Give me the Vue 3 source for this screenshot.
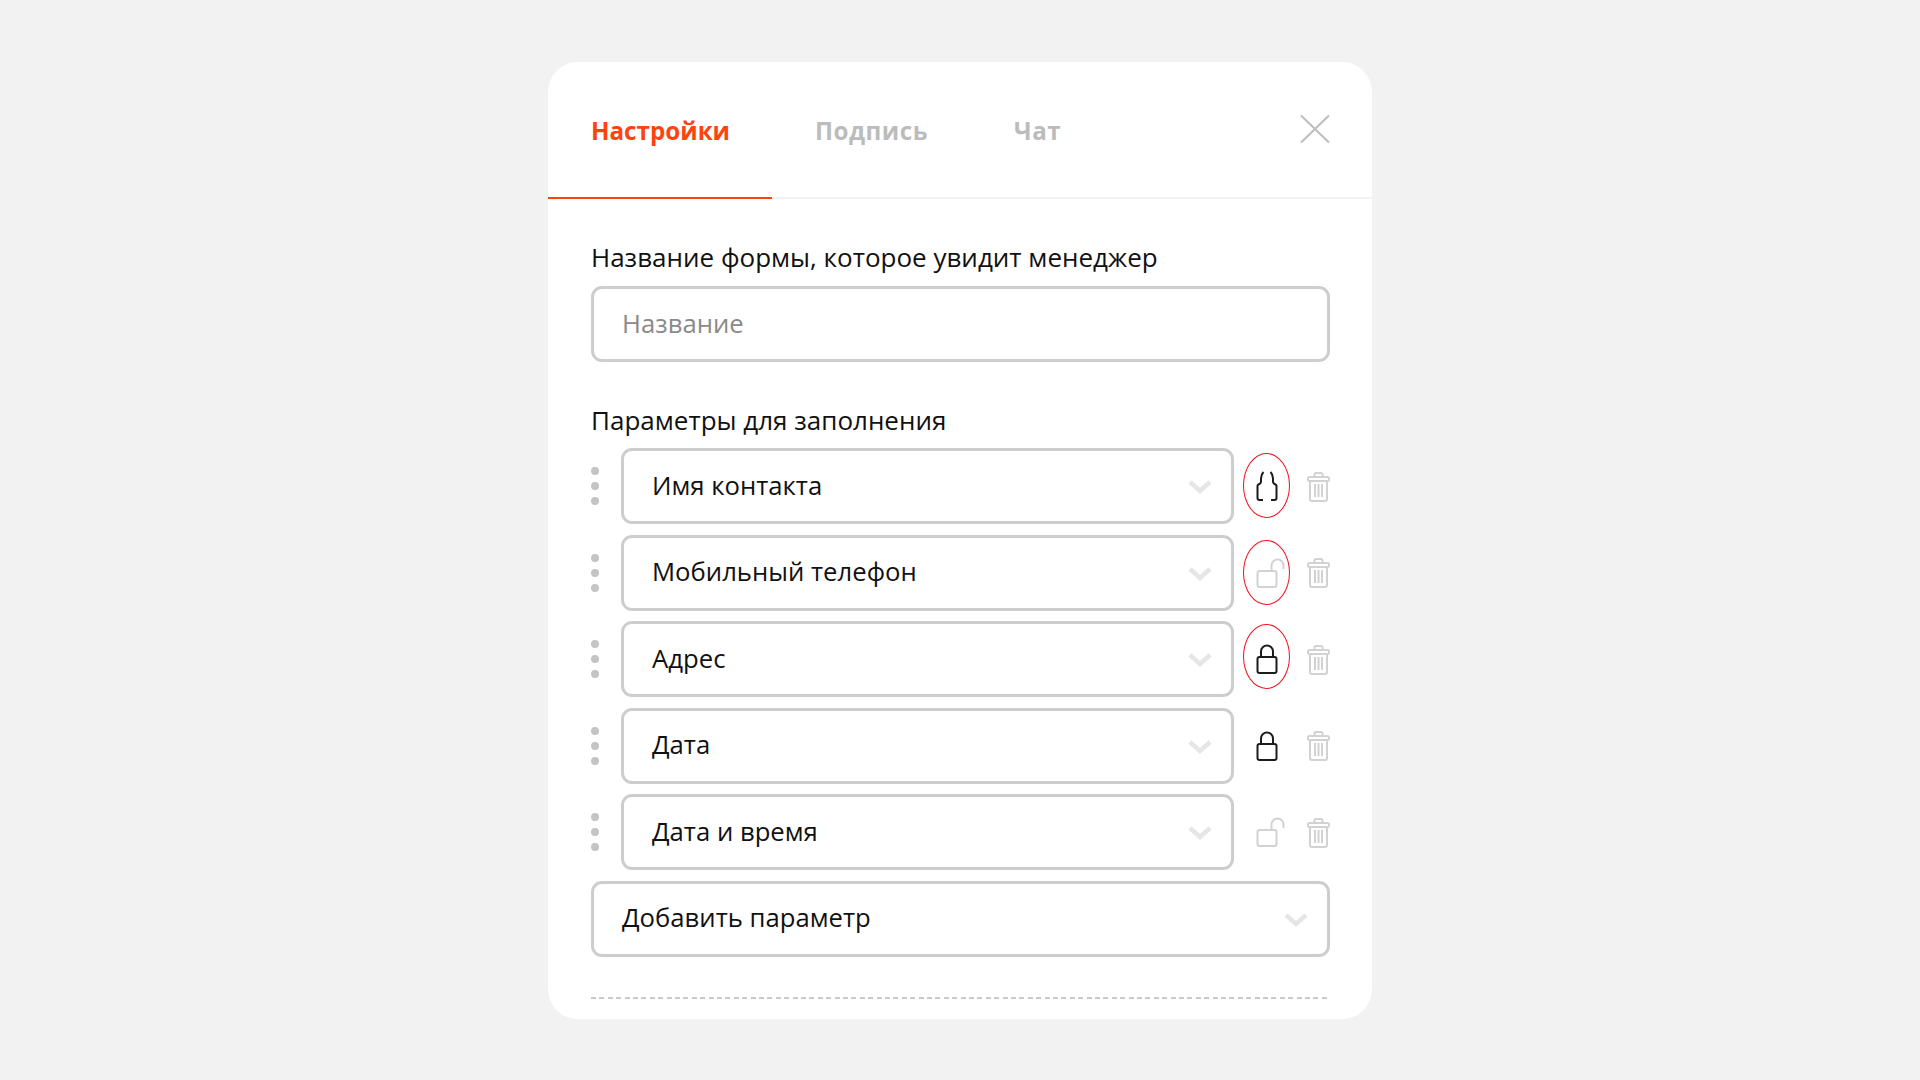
<script setup>
const tabs = [
	{ title: "Настройки", active: true },
	{ title: "Подпись", active: false },
	{ title: "Чат", active: false },
];

const params = [
	{ title: "Имя контакта", lock: "broken", oval: "oval-a" },
	{ title: "Мобильный телефон", lock: "open", oval: "oval-b" },
	{ title: "Адрес", lock: "closed", oval: "oval-c" },
	{ title: "Дата", lock: "closed", oval: "" },
	{ title: "Дата и время", lock: "open", oval: "" },
];
</script>

<template>
	<div class="page">
		<div class="card">
			<div class="header">
				<div v-for="tab in tabs" :key="tab.title" class="tab" :class="{ active: tab.active }">{{ tab.title }}</div>
				<svg class="close" width="30" height="30" viewBox="0 0 30 30" fill="none">
					<path d="M1 1.5L29 28.5M29 1.5L1 28.5" stroke="#bdbdbd" stroke-width="2" />
				</svg>
			</div>

			<div class="content">
				<div class="label">Название формы, которое увидит менеджер</div>
				<div class="field placeholder">Название</div>

				<div class="label label-params">Параметры для заполнения</div>
				<div class="rows">
					<div v-for="param in params" :key="param.title" class="row">
						<div class="dots"><i></i><i></i><i></i></div>
						<div class="field select">
							<span>{{ param.title }}</span>
							<svg class="chevron" width="24" height="14" viewBox="0 0 24 14" fill="none">
								<path d="M2 2L12 11L22 2" stroke="#e6e6e6" stroke-width="4.500" />
							</svg>
						</div>
						<div class="lock-slot">
							<svg width="46" height="34" viewBox="0 0 46 34" fill="none">
								<g v-if="param.lock === 'closed'" stroke="#1c1c1c" stroke-width="2">
									<rect x="14.500" y="15" width="19" height="16" rx="2" />
									<path d="M18 15V9.500a6 6 0 0 1 12 0v5.500" />
								</g>
								<g v-else-if="param.lock === 'open'" stroke="#d2d2d2" stroke-width="2">
									<rect x="14.500" y="15" width="19" height="16" rx="2" />
									<path d="M28.500 15V9.500a6 6 0 0 1 12 0v3.500" />
								</g>
								<g v-else stroke="#1c1c1c" stroke-width="2">
									<path d="M20.500 3C19 4.500 18 7 18 9.500V12.500Q18 14.500 15.500 15.500Q14.500 16 14.500 17V29Q14.500 31 16.500 31H20" />
									<path d="M27.500 3C29 4.500 30 7 30 9.500V12.500Q30 14.500 32.500 15.500Q33.500 16 33.500 17V29Q33.500 31 31.500 31H28" />
								</g>
							</svg>
							<div v-if="param.oval" class="oval" :class="param.oval"></div>
						</div>
						<svg class="trash" width="23" height="30" viewBox="0 0 23 30" fill="none">
							<g stroke="#d2d2d2" stroke-width="2">
								<path d="M7.500 5V2.500Q7.500 1 9 1H14Q15.500 1 15.500 2.500V5" />
								<rect x="1" y="5" width="21" height="4" rx="1.500" />
								<path d="M3 9V27Q3 29 5 29H18Q20 29 20 27V9" />
								<path d="M8 12V25M11.500 12V25M15 12V25" />
							</g>
						</svg>
					</div>
				</div>

				<div class="field select add">
					<span>Добавить параметр</span>
					<svg class="chevron" width="24" height="14" viewBox="0 0 24 14" fill="none">
						<path d="M2 2L12 11L22 2" stroke="#e6e6e6" stroke-width="4.500" />
					</svg>
				</div>

				<div class="dashed"></div>
			</div>
		</div>
	</div>
</template>

<style>
body {
	background: #f2f2f2;
}
</style>

<style scoped>
.page {
	height: 1080px;
	overflow: hidden;
	padding-top: 62px;
	box-sizing: border-box;
	font-family: "Open Sans", "Noto Sans", sans-serif;
	color: #111;
}

.card {
	width: 824px;
	margin: 0 auto;
	background: #fff;
	border-radius: 30px;
}

.header {
	display: flex;
	align-items: flex-start;
	border-bottom: 2px solid #f2f2f2;
}

.tab {
	padding: 53px 43px 50px;
	margin-bottom: -2px;
	font-size: 24.200px;
	line-height: 32px;
	font-weight: 700;
	letter-spacing: 0.500px;
	color: #bcbcbc;
	border-bottom: 2px solid transparent;
}

.tab.active {
	padding-right: 42px;
	letter-spacing: 0;
	color: #ff4310;
	border-bottom-color: #ff4310;
}

.close {
	margin: 52px 42px 0 auto;
}

.content {
	padding: 42px 42px 20px 43px;
}

.label {
	font-size: 26px;
	line-height: 32px;
	margin-bottom: 13px;
}

.label-params {
	margin-top: 42px;
	margin-bottom: 12px;
}

.field {
	height: 76px;
	box-sizing: border-box;
	border: 3px solid #cdcdcd;
	border-radius: 11px;
	padding: 0 19px 2px 28px;
	font-size: 25.700px;
	display: flex;
	align-items: center;
}

.placeholder {
	color: #8a8a8a;
}

.select {
	justify-content: space-between;
	flex: 1;
}

.chevron {
	margin-top: 4px;
}

.rows {
	display: flex;
	flex-direction: column;
	gap: 10.600px;
	margin-bottom: 10.600px;
}

.row {
	display: flex;
	align-items: center;
}

.dots {
	width: 30px;
	flex: none;
	display: flex;
	flex-direction: column;
	gap: 7px;
}

.dots i {
	width: 8px;
	height: 8px;
	border-radius: 50%;
	background: #c4c4c4;
}

.lock-slot {
	position: relative;
	flex: none;
	margin: 0 18px 0 9px;
	width: 46px;
	height: 34px;
}

.lock-slot svg {
	display: block;
}

.oval {
	position: absolute;
	left: 0;
	width: 47px;
	height: 65px;
	box-sizing: border-box;
	border: 1px solid #f0101c;
	border-radius: 50%;
}

.oval-a {
	top: -16px;
}

.oval-b {
	top: -16px;
}

.oval-c {
	top: -18px;
}

.trash {
	flex: none;
	margin-top: 1px;
}

.dashed {
	height: 2px;
	margin-top: 40px;
	background: repeating-linear-gradient(90deg, #c9c9c9 0 5px, transparent 5px 8.400px);
}
</style>
